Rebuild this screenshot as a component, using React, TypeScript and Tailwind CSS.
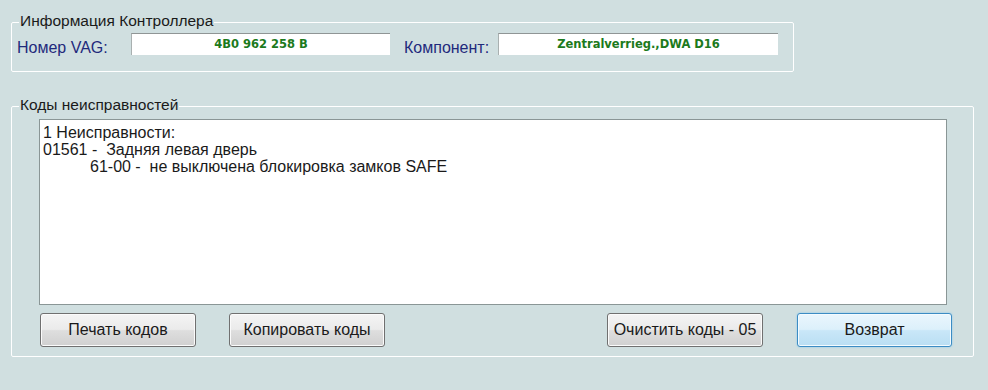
const btn =
    "h-[34px] w-[156px] rounded-[3px] border border-[#707070] text-[16px] text-[#1a1a1a] bg-[linear-gradient(to_bottom,#f4f4f4_0%,#ebebeb_48%,#dedede_52%,#d0d0d0_100%)] shadow-[inset_0_0_0_1px_#fbfbfb]"

const App = () => {
    return (
        <div className="w-[988px] h-[390px] bg-[#d0dfe0] pt-[22px] pl-[11px] font-['Liberation_Sans',Arial,sans-serif] text-[16px] text-[#1a1a1a]">
            {/* controller info */}
            <div className="w-[783px] border border-white rounded-[2px] pb-[15px]">
                <div className="-mt-[10px] ml-[7px] w-fit bg-[#d0dfe0] px-[1px] text-[15.5px] leading-[16px]">Информация Контроллера</div>
                <div className="flex items-start mt-[4px] ml-[5px]">
                    <div className="w-[114px] text-[#1f2a7c] leading-[16px] pt-[7px]">Номер VAG:</div>
                    <div className="w-[259px] h-[22px] bg-white border-t border-l border-t-[#8f9595] border-l-[#a9b0b0] flex items-center justify-center font-['DejaVu_Sans',Verdana,sans-serif] font-bold text-[11.5px] text-[#1c7a1c]">
                        4B0 962 258 B
                    </div>
                    <div className="ml-[14px] w-[94px] text-[#1f2a7c] leading-[16px] pt-[7px]">Компонент:</div>
                    <div className="w-[280px] h-[22px] bg-white border-t border-l border-t-[#8f9595] border-l-[#a9b0b0] flex items-center justify-center font-['DejaVu_Sans',Verdana,sans-serif] font-bold text-[11.5px] text-[#1c7a1c]">
                        Zentralverrieg.,DWA D16
                    </div>
                </div>
            </div>

            {/* fault codes */}
            <div className="mt-[34px] w-[963px] border border-white rounded-[2px] pb-[9px]">
                <div className="-mt-[10px] ml-[7px] w-fit bg-[#d0dfe0] px-[1px] text-[15.5px] leading-[16px]">Коды неисправностей</div>
                <div className="mt-[6px] ml-[27px] w-[908px] h-[186px] bg-white border border-[#8a9696] pt-[4px] pl-[3px] leading-[17px] whitespace-pre">
                    <div>1 Неисправности:</div>
                    <div>01561 -  Задняя левая дверь</div>
                    <div className="pl-[47px]">61-00 -  не выключена блокировка замков SAFE</div>
                </div>
                <div className="flex mt-[8px] ml-[28px]">
                    <button type="button" className={btn}>Печать кодов</button>
                    <button type="button" className={btn + " ml-[33px]"}>Копировать коды</button>
                    <button type="button" className={btn + " ml-[222px]"}>Очистить коды - 05</button>
                    <button
                        type="button"
                        className="ml-[34px] h-[34px] w-[155px] rounded-[3px] border border-[#3c8cc4] text-[16px] text-[#1a1a1a] bg-[linear-gradient(to_bottom,#eaf6fd_0%,#dcf0fb_48%,#c9e7f8_52%,#b9def3_100%)] shadow-[inset_0_0_0_1px_#f3fbff,0_0_2px_#7fc6ef]"
                    >
                        Возврат
                    </button>
                </div>
            </div>
        </div>
    )
}

export default App
